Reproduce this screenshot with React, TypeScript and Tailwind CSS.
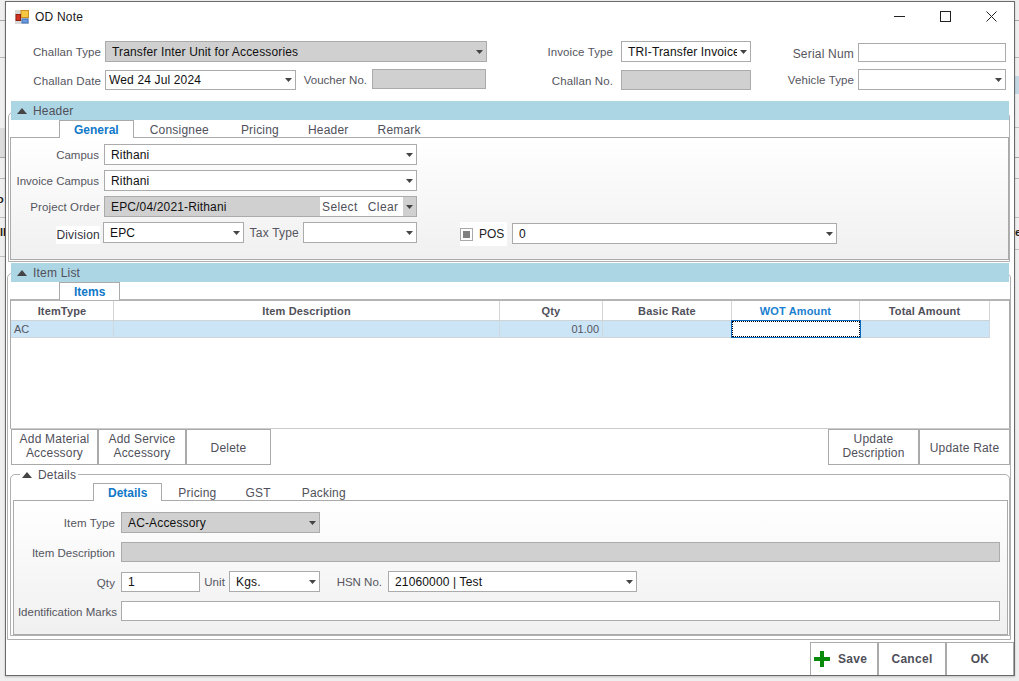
import type { ReactNode } from 'react';

const Caret = () => (
  <svg width="7" height="4" viewBox="0 0 7 4" className="shrink-0">
    <path d="M0 0h7L3.5 4z" fill="#444" />
  </svg>
);

const Collapse = () => (
  <svg width="10" height="6" viewBox="0 0 10 6" className="shrink-0">
    <path d="M5 0l5 6H0z" fill="#444" />
  </svg>
);

function Label({ w, big, tight, children, className = '' }: { w: number; big?: boolean; tight?: boolean; children: ReactNode; className?: string }) {
  const size = big ? 'text-[12px] tracking-[0.2px]' : tight ? 'text-[11.5px]' : 'text-[11.5px] tracking-[0.1px]';
  return (
    <div style={{ width: w }} className={`shrink-0 h-[21px] text-right leading-[22px] text-[#555560] whitespace-nowrap ${size} ${className}`}>
      {children}
    </div>
  );
}

function Field({ w, h = 21, value, gray, caret, className = '' }: { w: number; h?: number; value?: string; gray?: boolean; caret?: boolean; className?: string }) {
  return (
    <div
      style={{ width: w, height: h }}
      className={`shrink-0 flex items-center gap-[3px] border-[1.5px] border-[#ababab] pl-[6px] pr-[3px] text-[12px] text-[#111] whitespace-nowrap overflow-hidden ${gray ? 'bg-[#d0d0d0]' : 'bg-white'} ${className}`}
    >
      <span className="flex-1 overflow-hidden tracking-[0.15px]">{value}</span>
      {caret && <Caret />}
    </div>
  );
}

function Bar({ title }: { title: string }) {
  return (
    <div className="ml-[2px] w-[998px] h-[19px] bg-[#add6e5] flex items-center pl-[6px] gap-[6px] text-[12px] text-[#50505a]">
      <Collapse />
      <span className="tracking-[0.2px]">{title}</span>
    </div>
  );
}

function Tabs({ items, ml }: { items: [string, number, boolean?][]; ml: number }) {
  return (
    <div style={{ marginLeft: ml }} className="flex h-[17px] items-end text-[12px] text-[#50505a] relative z-10">
      {items.map(([name, gap, active]) => (
        <div
          key={name}
          style={{ marginLeft: gap }}
          className={
            active
              ? 'h-[18px] -mb-[1px] border border-b-0 border-[#aaa] bg-white px-[14px] pt-[2px] font-bold text-[#0f78c8] leading-[15px]'
              : 'h-[18px] -mb-[1px] pt-[3px] leading-[15px] tracking-[0.2px]'
          }
        >
          {name}
        </div>
      ))}
    </div>
  );
}

function ActionButton({ w, single, children }: { w: number; single?: boolean; children: ReactNode }) {
  return (
    <div style={{ width: w }} className="h-[36px] border border-[#aaa] bg-white flex items-center justify-center text-center text-[12px] leading-[14px] text-[#50505a] tracking-[0.2px]">
      <div className={single ? 'mt-[2px]' : '-mt-[2px]'}>{children}</div>
    </div>
  );
}

const columns = [
  ['ItemType', 103],
  ['Item Description', 386],
  ['Qty', 103],
  ['Basic Rate', 129],
  ['WOT Amount', 128],
  ['Total Amount', 130],
] as const;

export default function App() {
  return (
    <div className="relative w-[1019px] h-[681px] bg-[#efefef] overflow-hidden font-['Liberation_Sans',Arial,sans-serif]">
      {/* what shows of the window behind */}
      <div className="absolute left-0 top-[20px] w-[5px] h-[1px] bg-[#a8a8a8]" />
      <div className="absolute left-0 top-[57px] w-[5px] h-[1px] bg-[#b8b8b8]" />
      <div className="absolute left-0 top-[128px] w-[5px] h-[30px] bg-[#dcdcdc]" />
      <div className="absolute left-0 top-[157px] w-[5px] h-[1px] bg-[#a8a8a8]" />
      <div className="absolute left-0 top-[178px] w-[5px] h-[1px] bg-[#b8b8b8]" />
      <div className="absolute left-0 top-[217px] w-[5px] h-[1px] bg-[#c0c0c0]" />
      <div className="absolute left-0 top-[256px] w-[5px] h-[1px] bg-[#c0c0c0]" />
      <div className="absolute left-[-3px] top-[193px] text-[11px] leading-[13px] text-[#222] font-bold">o</div>
      <div className="absolute left-0 top-[226px] text-[11px] leading-[13px] text-[#222] font-bold">ll</div>
      <div className="absolute right-0 top-[20px] w-[4px] h-[1px] bg-[#a8a8a8]" />
      <div className="absolute right-0 top-[57px] w-[4px] h-[1px] bg-[#b8b8b8]" />
      <div className="absolute right-0 top-[76px] w-[4px] h-[18px] bg-[#c4d8e4]" />
      <div className="absolute right-0 top-[127px] w-[4px] h-[1px] bg-[#c0c0c0]" />
      <div className="absolute right-0 top-[157px] w-[4px] h-[1px] bg-[#a8a8a8]" />
      <div className="absolute right-0 top-[178px] w-[4px] h-[1px] bg-[#b8b8b8]" />
      <div className="absolute right-0 top-[217px] w-[4px] h-[1px] bg-[#c0c0c0]" />
      <div className="absolute right-0 top-[249px] w-[4px] h-[1px] bg-[#c0c0c0]" />
      <div className="absolute left-[1015px] top-[226px] text-[11px] leading-[13px] text-[#222] font-bold">e</div>

      <div className="absolute left-[5px] top-[1px] w-[1010px] h-[675px] border border-[#6a6a6a] bg-white shadow-[0_1px_2px_rgba(0,0,0,0.2)] flex flex-col">
        {/* title bar */}
        <div className="h-[32px] shrink-0 flex items-center pl-[9px] pb-[3px]">
          <svg width="14" height="14" viewBox="0 0 14 14" className="shrink-0">
            <rect width="14" height="14" fill="#d8d8d8" />
            <rect x="6" y="0.5" width="7.5" height="7" fill="#f6c644" stroke="#c89020" />
            <rect x="1" y="4.5" width="4.5" height="6" fill="#d03020" stroke="#902010" />
            <rect x="7" y="9" width="6" height="4" fill="#6a9be0" stroke="#4070b8" />
          </svg>
          <span className="ml-[6px] text-[12px] text-[#1a1a1a] tracking-[0.2px]">OD Note</span>
          <div className="ml-auto flex items-center mr-[17px] gap-[35px]">
            <svg width="11" height="11" viewBox="0 0 11 11"><path d="M0 5.5h11" stroke="#222" strokeWidth="1" /></svg>
            <svg width="11" height="11" viewBox="0 0 11 11"><rect x="0.5" y="0.5" width="10" height="10" fill="none" stroke="#222" /></svg>
            <svg width="11" height="11" viewBox="0 0 11 11"><path d="M0.5 0.5l10 10M10.5 0.5l-10 10" stroke="#222" strokeWidth="1" /></svg>
          </div>
        </div>

        {/* top form */}
        <div className="pt-[7px] h-[66px] shrink-0">
          <div className="flex items-start h-[21px]">
            <Label w={95}>Challan Type</Label>
            <Field w={382} value="Transfer Inter Unit for Accessories" gray caret className="ml-[4px]" />
            <Label w={126}>Invoice Type</Label>
            <Field w={130} value="TRI-Transfer Invoice" caret className="ml-[8px]" />
            <Label w={103} big className="mt-[2px]">Serial Num</Label>
            <Field w={148} h={19} className="ml-[4px] mt-[2px]" />
          </div>
          <div className="flex items-start mt-[7px]">
            <Label w={95} className="mt-[1px]">Challan Date</Label>
            <Field w={191} h={20} value="Wed 24 Jul 2024" caret className="ml-[4px] mt-[1px] pl-[3px]!" />
            <Label w={71} tight>Voucher No.</Label>
            <Field w={114} h={20} gray className="ml-[5px]" />
            <Label w={127} className="mt-[1px]">Challan No.</Label>
            <Field w={130} h={20} gray className="ml-[8px] mt-[1px]" />
            <Label w={103}>Vehicle Type</Label>
            <Field w={148} h={21} caret className="ml-[4px]" />
          </div>
        </div>

        {/* header section */}
        <div className="ml-[2px] mt-[12px] w-[1002px] h-[150px] shrink-0 border border-[#b0b0b0] rounded-t-[5px]">
          <div className="-mt-[12px]">
            <Bar title="Header" />
            <Tabs
              ml={50}
              items={[
                ['General', 0, true],
                ['Consignee', 16],
                ['Pricing', 32],
                ['Header', 29],
                ['Remark', 29],
              ]}
            />
            <div className="ml-[1px] w-[999px] h-[123px] border border-[#aaa] bg-gradient-to-b from-white to-[#f0f0f0] pt-[6px]">
              <div className="flex">
                <Label w={88} tight>Campus</Label>
                <Field w={313} value="Rithani" caret className="ml-[5px]" />
              </div>
              <div className="flex mt-[5px]">
                <Label w={88} tight>Invoice Campus</Label>
                <Field w={313} value="Rithani" caret className="ml-[5px]" />
              </div>
              <div className="flex mt-[5px]">
                <Label w={89}>Project Order</Label>
                <div className="ml-[4px] w-[313px] h-[21px] shrink-0 flex border-[1.5px] border-[#ababab] bg-[#d0d0d0] text-[12px] text-[#111] pl-[6px] items-center">
                  <span className="w-[209px] tracking-[0.15px]">EPC/04/2021-Rithani</span>
                  <div className="w-[83px] h-full bg-white flex items-center pl-[2px] gap-[10px] text-[#50505a] tracking-[0.4px]">
                    <span>Select</span>
                    <span>Clear</span>
                  </div>
                  <div className="w-[13px] flex justify-center"><Caret /></div>
                </div>
              </div>
              <div className="flex items-start mt-[5px]">
                <div className="ml-[45px] mt-[4px] w-[44px] h-[18px] shrink-0 bg-white text-right text-[12px] leading-[18px] text-[#33333d] tracking-[0.2px]">Division</div>
                <Field w={141} value="EPC" caret className="ml-[3px]" />
                <Label w={55} big>Tax Type</Label>
                <Field w={114} caret className="ml-[4px]" />
                <div className="ml-[43px] w-[47px] h-[24px] shrink-0 bg-white flex items-center text-[12px] text-[#222]">
                  <div className="w-[13px] h-[13px] border border-[#aaa] flex items-center justify-center">
                    <div className="w-[7px] h-[7px] bg-[#808080]" />
                  </div>
                  <span className="ml-[6px]">POS</span>
                </div>
                <Field w={325} h={21} value="0" caret className="ml-[5px] mt-[1px]" />
              </div>
            </div>
          </div>
        </div>

        {/* item list section */}
        <div className="ml-[1px] mt-[11px] w-[1004px] h-[367px] shrink-0 border border-[#b0b0b0] rounded-t-[5px]">
          <div className="-mt-[11px] ml-[1px]">
            <Bar title="Item List" />
            <Tabs ml={50} items={[['Items', 0, true]]} />
            <div className="ml-[1px] w-[1000px] h-[130px] border-t-2 border-b border-r border-l border-t-[#b4b4b4] border-b-[#ccc] border-r-[#aaa] border-l-[#aaa] bg-white">
              <div className="flex h-[19px]">
                {columns.map(([name, w]) => (
                  <div
                    key={name}
                    style={{ width: w }}
                    className={`shrink-0 border-r border-[#d4d4d4] text-center text-[11px] font-bold leading-[20px] tracking-[0.15px] ${name === 'WOT Amount' ? 'text-[#1a80d0]' : 'text-[#50505a]'}`}
                  >
                    {name}
                  </div>
                ))}
              </div>
              <div className="flex h-[18px] bg-[#cbe4f6] w-[979px] border-t border-b border-[#cfd4d8]">
                {columns.map(([name, w]) =>
                  name === 'WOT Amount' ? (
                    <div key={name} style={{ width: w }} className="shrink-0 bg-white border border-dotted border-black outline outline-1 outline-[#0a6ac0]" />
                  ) : (
                    <div
                      key={name}
                      style={{ width: w }}
                      className={`shrink-0 border-r border-[#cfd8de] text-[11px] leading-[16px] text-[#555560] px-[3px] ${name === 'Qty' ? 'text-right' : ''}`}
                    >
                      {name === 'ItemType' ? 'AC' : name === 'Qty' ? '01.00' : ''}
                    </div>
                  )
                )}
              </div>
            </div>
            <div className="ml-[2px] w-[999px] flex">
              <ActionButton w={87}>Add Material<br />Accessory</ActionButton>
              <ActionButton w={88}>Add Service<br />Accessory</ActionButton>
              <ActionButton w={85} single>Delete</ActionButton>
              <div className="flex-1" />
              <ActionButton w={91}>Update<br />Description</ActionButton>
              <ActionButton w={91} single>Update Rate</ActionButton>
            </div>

            {/* details group */}
            <div className="ml-[1px] mt-[9px] w-[1000px] h-[162px] border border-[#b0b0b0] rounded-t-[5px]">
              <div className="-mt-[9px] ml-[9px] w-fit h-[17px] bg-white flex items-center gap-[6px] px-[2px] text-[12px] text-[#50505a] tracking-[0.2px]">
                <Collapse />
                <span>Details</span>
              </div>
              <Tabs
                ml={82}
                items={[
                  ['Details', 0, true],
                  ['Pricing', 16],
                  ['GST', 29],
                  ['Packing', 31],
                ]}
              />
              <div className="ml-[2px] w-[995px] h-[135px] border border-[#aaa] bg-gradient-to-b from-white to-[#f0f0f0] pt-[11px]">
                <div className="flex">
                  <Label w={101}>Item Type</Label>
                  <Field w={199} value="AC-Accessory" gray caret className="ml-[6px]" />
                </div>
                <div className="flex mt-[9px]">
                  <Label w={101} tight className="leading-[20px]">Item Description</Label>
                  <Field w={879} h={20} gray className="ml-[6px]" />
                </div>
                <div className="flex items-start mt-[8px]">
                  <Label w={101} className="mt-[1px]">Qty</Label>
                  <Field w={79} h={20} value="1" className="ml-[6px] mt-[1px]" />
                  <Label w={25}>Unit</Label>
                  <Field w={91} value="Kgs." caret className="ml-[4px]" />
                  <Label w={62} tight>HSN No.</Label>
                  <Field w={249} value="21060000 | Test" caret className="ml-[6px]" />
                </div>
                <div className="flex mt-[8px]">
                  <Label w={103} tight className="leading-[19px]">Identification Marks</Label>
                  <Field w={879} h={20} className="ml-[4px]" />
                </div>
              </div>
            </div>
          </div>
        </div>

        {/* footer */}
        <div className="mt-auto flex justify-end h-[33px] text-[12px] font-bold text-[#50505a] tracking-[0.3px]">
          <div className="w-[68px] border border-[#aaa] border-b-0 bg-white flex items-center pl-[3px] gap-[8px]">
            <svg width="16" height="16" viewBox="0 0 16 16" className="shrink-0">
              <path d="M6 0h4v6h6v4h-6v6H6v-6H0V6h6z" fill="#0a8a0a" />
            </svg>
            <span>Save</span>
          </div>
          <div className="w-[68px] border border-[#aaa] border-b-0 bg-white flex items-center justify-center">Cancel</div>
          <div className="w-[68px] border border-[#aaa] border-b-0 bg-white flex items-center justify-center">OK</div>
        </div>
      </div>
    </div>
  );
}
